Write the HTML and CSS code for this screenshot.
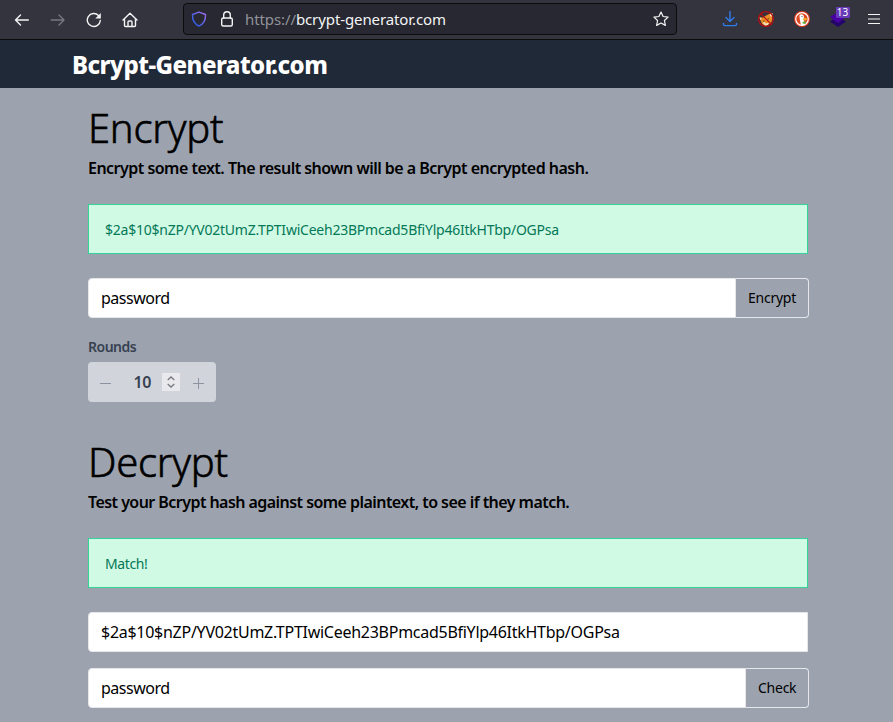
FILE: index.html
```html
<!DOCTYPE html>
<html lang="en">
<head>
<meta charset="utf-8">
<title>Bcrypt-Generator.com</title>
<link rel="stylesheet" href="styles.css">
</head>
<body>
<div class="toolbar">
  <div class="nav-icons">
    <svg width="16" height="16" viewBox="0 0 16 16" class="icon"><path d="M14.300 8H1.500M6.500 3 1.500 8l5 5"/></svg>
    <svg width="16" height="16" viewBox="0 0 16 16" class="icon dim"><path d="M1.200 8H14M9 3l5 5-5 5"/></svg>
    <svg width="16" height="16" viewBox="0 0 16 16" class="icon"><path d="M12.500 3.500A6.500 6.500 0 1 0 14.300 8.500"/><path class="solid" d="M14.800 1v5.500H9.300z"/></svg>
    <svg width="16" height="16" viewBox="0 0 16 16" class="icon"><path d="M1 8 8 1.300 15 8M2.500 7v6.500q0 1 1 1h9q1 0 1-1V7M6 14.500V10q0-1 1-1h2q1 0 1 1v4.500"/></svg>
  </div>
  <div class="address">
    <svg width="16" height="16" viewBox="0 0 16 16" class="icon shield"><defs><linearGradient id="sg" x1="0" y1="1" x2="1" y2="0"><stop offset="0.200" stop-color="#315ee8"/><stop offset="1" stop-color="#a56de8"/></linearGradient></defs><path stroke="url(#sg)" d="M8 1.200 14.500 3.500C14.800 9 12.500 13 8 15 3.500 13 1.200 9 1.500 3.500Z"/></svg>
    <svg width="14" height="16" viewBox="0 0 14 16" class="icon lock"><rect x="1.700" y="7" width="10.600" height="8" rx="1.500"/><path d="M3.700 7V4a3.300 3.300 0 0 1 6.600 0v3"/></svg>
    <span class="url"><span class="scheme">https://</span>bcrypt-generator.com</span>
    <svg width="16" height="16" viewBox="0 0 16 16" class="icon star"><path d="m8 1 2.100 4.500 5 .6-3.700 3.400 1 4.900L8 12l-4.400 2.400 1-4.900L.9 6.100l5-.6z"/></svg>
  </div>
  <div class="ext-icons">
    <svg width="16" height="16" viewBox="0 0 16 16" class="icon download"><path d="M8 .5v10M4 6.500l4 4 4-4M1.500 12.500v.8q0 1.300 1.300 1.300h10.400q1.300 0 1.300-1.300v-.8"/></svg>
    <svg width="16" height="16" viewBox="0 0 16 16"><path fill="#ed8d25" d="M1.500 6.500 5 6.500l4-2.500 4.500-2 1 6L13 12l-5 3-4-2z"/><path fill="#f8dfb9" d="m12 2.500 2.500-.5-.1 4-2.400-1zM1 6l2.500 1L3 9.500zM4.500 11.500l2-.5 1.500 1.500 3-1-1 2.500-3 .8z"/><path fill="#49341f" d="m4.500 10 2.500-.5-1 1.200zm6-3-1.500 1.500 2-.3z"/><circle cx="8" cy="8" r="7.400" fill="none" stroke="#b90d12" stroke-width="1.200"/><path d="m3 3 10 10" stroke="#b90d12" stroke-width="1.200"/></svg>
    <svg width="16" height="16" viewBox="0 0 16 16"><circle cx="8" cy="8" r="8" fill="#de3b1d"/><circle cx="8" cy="8" r="6.300" fill="#de4922" stroke="#fff" stroke-width="1.200"/><path fill="#fff" d="M5.500 4c2-1.500 4.500-.5 4.500 2.500L10 9.500l.5 4.500q-2 .5-3.500 0C6 10 5.500 7 5.500 4z"/><path fill="#f8a527" d="m9.300 6.800 4 .5-.8 2-3.200.2z"/><path fill="#5bb647" d="m8.500 11 3-1v3l-3-.500z"/><circle cx="8" cy="5.500" r=".6" fill="#315f86"/></svg>
    <div class="stack"><svg width="16" height="16" viewBox="0 0 16 16"><path fill="#24036b" d="m0 10.500 3-2 5 3 5-3 3 2L8 16z"/><path fill="#4900a5" d="M0 6 8 1l8 5-8 6z"/></svg><span class="badge">13</span></div>
    <svg width="12" height="12" viewBox="0 0 12 12" class="menu"><path d="M0 1.500h12M0 6h12M0 10.500h12"/></svg>
  </div>
</div>
<header class="site-header"><span class="brand">Bcrypt-Generator.com</span></header>
<main>
  <section>
    <h1><span class="t-encrypt">Encrypt</span></h1>
    <p class="lead"><span class="t-lead1">Encrypt some text. The result shown will be a Bcrypt encrypted hash.</span></p>
    <div class="alert"><span class="t-hash">$2a$10$nZP/YV02tUmZ.TPTIwiCeeh23BPmcad5BfiYlp46ItkHTbp/OGPsa</span></div>
    <div class="group"><div class="field"><span class="t-pass">password</span></div><div class="button b-encrypt"><span>Encrypt</span></div></div>
    <div class="label"><span>Rounds</span></div>
    <div class="rounds">
      <span class="sign"><svg width="11" height="11" viewBox="0 0 11 11"><path d="M0 5.500h11"/></svg></span>
      <span class="count">10</span>
      <span class="spinner"><svg width="8" height="12" viewBox="0 0 8 12"><path d="M.7 4 4 1l3.300 3M.7 8 4 11l3.300-3"/></svg></span>
      <span class="sign plus"><svg width="11" height="11" viewBox="0 0 11 11"><path d="M0 5.500h11M5.500 0v11"/></svg></span>
    </div>
  </section>
  <section class="decrypt">
    <h1><span class="t-decrypt">Decrypt</span></h1>
    <p class="lead"><span class="t-lead2">Test your Bcrypt hash against some plaintext, to see if they match.</span></p>
    <div class="alert"><span class="t-match">Match!</span></div>
    <div class="field full"><span class="t-hash2">$2a$10$nZP/YV02tUmZ.TPTIwiCeeh23BPmcad5BfiYlp46ItkHTbp/OGPsa</span></div>
    <div class="group second"><div class="field"><span class="t-pass">password</span></div><div class="button b-check"><span>Check</span></div></div>
  </section>
</main>
</body>
</html>
```
FILE: styles.css
```css
* { box-sizing: border-box; }
body { margin: 0; width: 893px; height: 722px; overflow: hidden; background: #9ca3af; color: #000; font-family: "Noto Sans", sans-serif; font-size: 16px; line-height: 24px; white-space: nowrap; }
svg { display: block; flex: none; }
.toolbar { height: 40px; background: #33343d; border-bottom: 1px solid #0c0c0d; display: flex; align-items: center; }
.icon { fill: none; stroke: #f4f4f5; stroke-width: 1.4; stroke-linecap: round; stroke-linejoin: round; }
.icon .solid { fill: #f4f4f5; stroke: none; }
.dim { stroke: #77787e; }
.nav-icons { display: flex; gap: 20px; padding-left: 14px; width: 183px; }
.address { width: 494px; height: 32px; border: 1px solid #0c0c0d; border-radius: 4px; background: #272831; display: flex; align-items: center; padding: 0 7px; margin-top: -2px; }
.lock { margin-left: 13px; }
.url { margin-left: 11px; font-size: 15px; letter-spacing: -0.1px; color: #f4f4f5; }
.scheme { color: #92939a; }
.star { margin-left: auto; stroke-width: 1.2; }
.ext-icons { display: flex; align-items: center; gap: 20px; margin-left: 44.500px; margin-top: -2px; }
.download { stroke: #317bea; }
.stack { position: relative; }
.badge { position: absolute; left: 6px; top: -4px; width: 14px; height: 11px; border-radius: 1px; background: #673ab7; color: #fff; font-size: 10px; line-height: 11px; text-align: center; }
.menu { margin-left: 2px; stroke: #f4f4f5; stroke-width: 1.2; }
.site-header { height: 48px; background: #1f2937; padding: 0 72px; line-height: 49px; }
.brand { color: #fff; font-size: 24px; font-weight: 800; letter-spacing: -0.55px; }
main { padding: 16px 85px 0 88px; }
h1 { margin: 0; font-size: 40px; line-height: 48px; font-weight: 300; height: 52px; letter-spacing: -0.25px; -webkit-text-stroke: 0.6px #000; }
.lead { margin: 0; height: 24px; font-weight: 600; letter-spacing: -0.52px; }
.t-lead2 { letter-spacing: -0.55px; }
.alert { width: 720px; height: 50px; margin-top: 24px; padding: 0 16px; border: 1px solid #34d399; background: #d1fae5; color: #047857; font-size: 14px; line-height: 50px; letter-spacing: -0.235px; }
.t-match { letter-spacing: -0.4px; }
.group { display: flex; width: 721px; height: 40px; margin-top: 24px; }
.field { flex: 1; height: 40px; background: #fff; border: 1px solid #e5e7eb; border-radius: 4px 0 0 4px; padding: 0 12px; line-height: 38px; }
.t-pass { letter-spacing: -0.5px; }
.t-hash2 { letter-spacing: -0.27px; }
.button { height: 40px; border: 1px solid #e5e7eb; border-left: 0; border-radius: 0 4px 4px 0; font-size: 14px; line-height: 38px; padding-left: 12px; letter-spacing: -0.25px; }
.b-encrypt { width: 73px; }
.b-check { width: 63px; }
.label { height: 20px; margin-top: 19px; font-size: 14px; line-height: 20px; font-weight: 600; letter-spacing: -0.5px; color: #374151; }
.rounds { width: 128px; height: 40px; margin-top: 5px; border-radius: 4px; background: #d1d5db; display: flex; align-items: center; color: #374151; font-weight: 600; padding-left: 12px; }
.rounds svg { fill: none; stroke: #8c93a0; stroke-width: 1; }
.rounds .spinner svg { stroke: #777881; stroke-width: 1.3; }
.sign { padding-top: 3px; }
.count { margin-left: 22.500px; width: 28.500px; letter-spacing: -0.3px; }
.spinner { width: 18px; height: 18px; background: #e9e9ed; padding: 3px 5px; }
.plus { margin-left: 13px; }
.decrypt { margin-top: 36px; }
.full { width: 720px; margin-top: 24px; border-radius: 4px 0 0 4px; }
.second { margin-top: 16px; }
```
